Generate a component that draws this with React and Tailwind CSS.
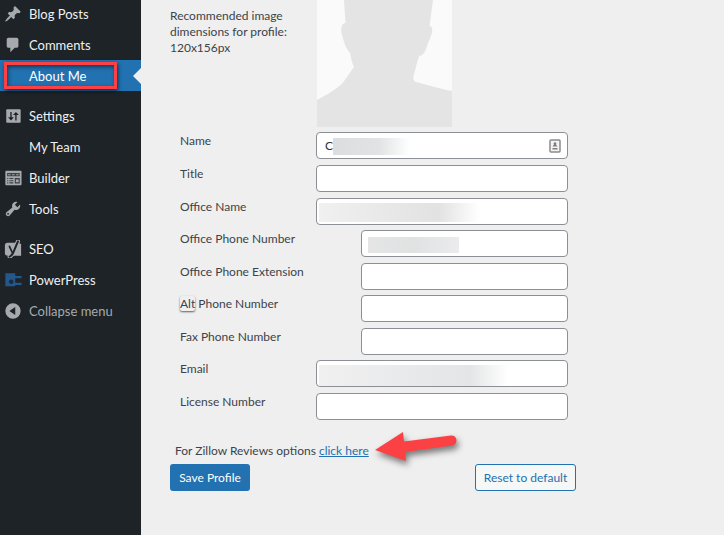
import React from "react";

const icons = {
  pin: <path d="M10.44 3.02l1.82-1.82 6.36 6.35-1.83 1.82c-1.05-.68-2.48-.57-3.41.36l-.75.75c-.92.93-1.04 2.35-.35 3.41l-1.83 1.82-2.41-2.41-2.8 2.79c-.42.42-3.38 2.71-3.8 2.29s1.86-3.39 2.28-3.81l2.79-2.79L4.1 9.36l1.83-1.82c1.05.69 2.48.57 3.4-.36l.75-.75c.93-.92 1.05-2.35.36-3.41z" />,
  comment: <path d="M5 2h9c1.1 0 2 .9 2 2v7c0 1.1-.9 2-2 2h-2l-5 5v-5H5c-1.100 0-2-.9-2-2V4c0-1.100.9-2 2-2z" />,
  settings: (
    <g>
      <rect x="2.500" y="2.500" width="16" height="15" rx="1" />
      <path d="M7 5.500h1.500v6H11L7.750 15 4.500 11.500H7zM12.500 15H14V9h2.500L13.250 5.500 10 9h2.500z" fill="#1d2327" />
    </g>
  ),
  builder: (
    <g>
      <rect x="1.500" y="2" width="18" height="16" rx="1" />
      <g fill="#3a4147">
        <path fillRule="evenodd" d="M3.500 4.500h14v3.500h-14zM4.500 5.700v1.200h2.800V5.700zM9 5.700v1.200h2.800V5.700zM13.500 5.700v1.200h2.800V5.700z" />
        <path d="M3.500 10h1.300v1.200H3.500zM6 10h4.400v1.200H6zM3.500 12.400h1.300v1.200H3.500zM6 12.400h4.400v1.200H6zM3.500 14.800h1.300V16H3.500zM6 14.800h4.400V16H6z" />
        <path fillRule="evenodd" d="M12 10h5.500v6H12zM13.200 11.800v3h3.100v-3z" />
      </g>
    </g>
  ),
  tools: <path d="M16.68 9.77c-1.34 1.34-3.3 1.67-4.95.99l-5.41 6.52c-.99.99-2.59.99-3.58 0s-.99-2.59 0-3.57l6.52-5.42c-.68-1.65-.35-3.61.99-4.95 1.28-1.28 3.12-1.62 4.72-1.06l-2.89 2.89 2.82 2.82 2.86-2.87c.53 1.58.18 3.39-1.08 4.65zM3.81 16.21c.4.39 1.04.39 1.43 0 .4-.4.4-1.04 0-1.43-.39-.4-1.03-.4-1.43 0-.39.39-.39 1.03 0 1.43z" />,
  seo: (
    <g>
      <path d="M4 3h11.500L19 4.500V17.500H4A3 3 0 0 1 1 14.500V6A3 3 0 0 1 4 3z" />
      <g fill="none" strokeLinecap="round" strokeLinejoin="round">
        <path d="M15.500 1.500L10.500 13.500c-1 2.500-2 4.300-4.300 5" stroke="#a7aaad" strokeWidth="4.500" />
        <path d="M15.500 1.500L10.500 13.500c-1 2.500-2 4.300-4.300 5" stroke="#1d2327" strokeWidth="2.200" />
        <path d="M6 7l3 6.500" stroke="#1d2327" strokeWidth="1.800" />
      </g>
    </g>
  ),
  power: (
    <g fill="#24588a">
      <path d="M1.500 2.500h11v3h7V8h-7v5h7v2.500h-7V17h-11z" />
      <circle cx="8" cy="12" r="2.500" fill="#1d2b3c" />
    </g>
  ),
  collapse: <path fillRule="evenodd" d="M10 1.500a8.500 8.500 0 1 0 0 17 8.500 8.500 0 0 0 0-17zM12.500 5.500v9L6 10z" />,
};

const menu = [
  [
    { label: "Blog Posts", icon: "pin" },
    { label: "Comments", icon: "comment" },
    { label: "About Me", active: true },
  ],
  [
    { label: "Settings", icon: "settings" },
    { label: "My Team" },
    { label: "Builder", icon: "builder" },
    { label: "Tools", icon: "tools" },
  ],
  [
    { label: "SEO", icon: "seo" },
    { label: "PowerPress", icon: "power" },
  ],
];

const itemClass = "relative flex h-[31px] w-full items-center gap-[7px] pl-1 text-[13px] leading-4";

function MenuIcon({ name }) {
  return (
    <svg viewBox="0 0 20 20" className="size-[18px] shrink-0 fill-[#a7aaad]" aria-hidden="true">
      {name ? icons[name] : null}
    </svg>
  );
}

function MenuItem({ label, icon, active }) {
  return (
    <li>
      <a href="#" className={itemClass + (active ? " bg-[#2271b1] text-white" : " text-[#f0f0f1]")}>
        <MenuIcon name={icon} />
        {label}
        {active && (
          <>
            <span className="absolute top-[2px] left-1 h-[27px] w-[113px] border-3 border-[#fb4143] shadow-[1px_2px_4px_rgba(0,0,0,0.6),inset_1px_2px_4px_rgba(0,0,0,0.5)]" />
            <svg viewBox="0 0 8 16" className="absolute top-2 right-0 h-4 w-2 fill-[#efefef]" aria-hidden="true">
              <path d="M8 0v16L0 8z" />
            </svg>
          </>
        )}
      </a>
    </li>
  );
}

const fields = [
  { id: "name", label: "Name", value: "C", card: true, blur: "left-[17px] top-1.5 h-[17px] w-[77px] from-[#dcdddf] via-[#e2e3e4] via-60% to-white" },
  { id: "title", label: "Title" },
  { id: "office", label: "Office Name", blur: "left-[3px] top-[5px] h-[19px] w-[160px] from-[#f0f0f1] via-[#e2e2e3] via-75% to-white" },
  { id: "phone", label: "Office Phone Number", short: true, blur: "left-[7px] top-[7px] h-4 w-[91px] from-[#e5e5e6] via-[#e0e2e2] to-[#ebebed]" },
  { id: "ext", label: "Office Phone Extension", short: true },
  { id: "alt", label: "Alt Phone Number", short: true, boxed: true },
  { id: "fax", label: "Fax Phone Number", short: true },
  { id: "email", label: "Email", blur: "left-[3px] top-[5px] h-[21px] w-[189px] from-[#f0f0f1] via-[#e4e5e6] via-80% to-white" },
  { id: "license", label: "License Number" },
];

function Field({ id, label, value, short, card, blur, boxed }) {
  return (
    <div className="flex items-start justify-between odd:h-8 even:h-[33px] first:odd:h-[33px]">
      <label htmlFor={id} className="pl-2.5 leading-[18px]">
        {boxed ? (
          <>
            <span className="rounded-xs shadow-[0_1px_2px_rgba(0,0,0,0.6)]">Alt</span> Phone Number
          </>
        ) : (
          label
        )}
      </label>
      <div className={"relative " + (short ? "w-[207px]" : "w-[252px]")}>
        <input
          id={id}
          type="text"
          defaultValue={value}
          className="block h-[27px] w-full rounded-[4px] border border-[#8c8f94] bg-white px-2 text-[#2c3338]"
        />
        {blur && <span className={"absolute bg-linear-to-r " + blur} />}
        {card && (
          <svg viewBox="0 0 12 14" className="absolute top-[7px] right-[7px] h-3.5 w-3" aria-hidden="true">
            <rect x="1" y="1" width="10" height="12" rx="1" fill="#f4f4f4" stroke="#8a8a8a" strokeWidth="1.500" />
            <path d="M6 3.200a1.400 1.400 0 0 1 1 2.400L8.500 7.500h-5L5 5.600a1.400 1.400 0 0 1 1-2.400zM3.500 9h5v1.500h-5z" fill="#7d7d7d" />
          </svg>
        )}
      </div>
    </div>
  );
}

export default function App() {
  return (
    <div className="flex min-h-screen overflow-hidden bg-[#efefef] font-['Lato','Open_Sans',sans-serif] text-[12px] text-[#3c434a]">
      <nav className="w-[141px] shrink-0 bg-[#1d2327]">
        <div className="-mt-0.5 flex flex-col gap-[9px]">
          {menu.map((group, i) => (
            <ul key={i}>
              {group.map((item) => (
                <MenuItem key={item.label} {...item} />
              ))}
              {i === menu.length - 1 && (
                <li>
                  <button type="button" className={itemClass + " text-[#a7aaad]"}>
                    <MenuIcon name="collapse" />
                    Collapse menu
                  </button>
                </li>
              )}
            </ul>
          ))}
        </div>
      </nav>

      <main className="min-w-0 flex-1 pl-[29px]">
        <form className="max-w-[406px]" onSubmit={(e) => e.preventDefault()}>
          <div className="flex max-w-[398px] items-start">
            <p className="w-[147px] pt-2 pr-5 leading-4">Recommended image dimensions for profile: 120x156px</p>
            <svg viewBox="0 0 135 127" className="h-[127px] w-[135px] shrink-0" role="img" aria-label="Profile placeholder">
              <rect width="135" height="127" fill="#fafafa" />
              <path
                d="M27 0L28.500 23C24 23 23.500 30 25 35C27 42 29 49 33 53C34 58 35 63 37 67L25 84C18 90 9 95 0 100V127H135V91C124 89 114 86 99 82C96 81 96 78 97 74L102 56C108 55 109 49 111 43C114 37 116 31 115 28C114 26 113 26 112.500 26L116 0z"
                fill="#e4e4e4"
              />
            </svg>
          </div>

          <div className="max-w-[398px] pt-[5px]">
            {fields.map((field) => (
              <Field key={field.id} {...field} />
            ))}
          </div>

          <div className="flex items-start pt-4 pl-[5px]">
            <p className="leading-5">
              For Zillow Reviews options{" "}
              <a href="#" className="text-[#2271b1] underline">
                click here
              </a>
            </p>
            <svg viewBox="0 0 90 40" className="-my-3 ml-1 h-10 w-[90px] overflow-visible drop-shadow-[2px_4px_3px_rgba(0,0,0,0.5)]" aria-hidden="true">
              <path d="M2 21L30 3L31 12.500L78 6.500A5 5 0 0 1 79 16.500L32 23L33 32z" fill="#fb4143" />
            </svg>
          </div>

          <div className="flex items-center justify-between pt-[3px]">
            <button type="submit" className="h-[27px] w-20 rounded-[3px] bg-[#2271b1] text-white">
              Save Profile
            </button>
            <button type="reset" className="h-[27px] w-[101px] rounded-[3px] border border-[#2271b1] bg-[#f6f7f7] text-[#2271b1]">
              Reset to default
            </button>
          </div>
        </form>
      </main>
    </div>
  );
}
